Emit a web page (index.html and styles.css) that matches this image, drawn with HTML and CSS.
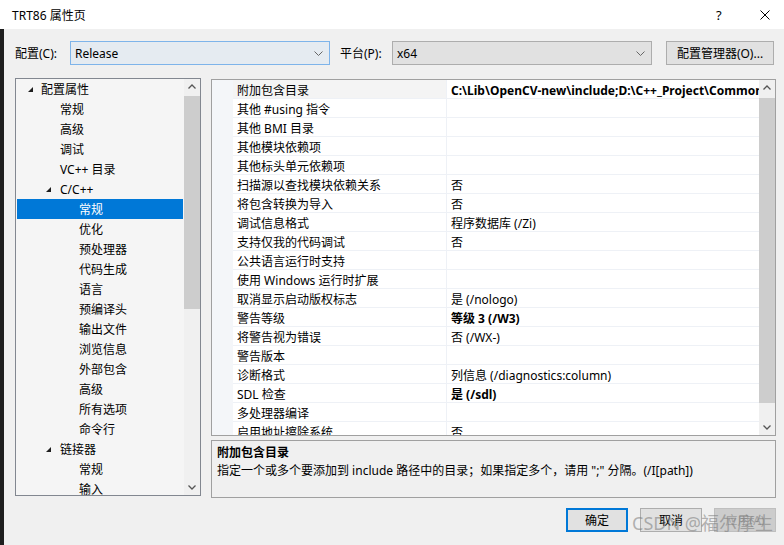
FILE: index.html
```html
<!DOCTYPE html>
<html lang="zh-CN">
<head>
    <meta charset="UTF-8">
    <title>TRT86 属性页</title>
    <link rel="stylesheet" href="styles.css">
</head>
<body>
    <div class="titlebar">
        <span class="title">TRT86 属性页</span>
        <span class="help">?</span>
        <span class="close">
            <svg width="10" height="10" viewBox="0 0 10 10"><path d="M0.5 0.5 L9.5 9.5 M9.5 0.5 L0.5 9.5" stroke="#000" stroke-width="1" fill="none"/></svg>
        </span>
    </div>
    <div class="frame">
        <div class="editor-strip"></div>
        <div class="dialog">
            <div class="toolbar">
                <label class="tb-label">配置(C):</label>
                <div class="combo combo-focus">
                    <span>Release</span>
                    <svg class="chev" width="9" height="5" viewBox="0 0 9 5"><path d="M0.5 0.5 L4.5 4.5 L8.5 0.5" stroke="#666" fill="none"/></svg>
                </div>
                <label class="tb-label plat">平台(P):</label>
                <div class="combo">
                    <span>x64</span>
                    <svg class="chev" width="9" height="5" viewBox="0 0 9 5"><path d="M0.5 0.5 L4.5 4.5 L8.5 0.5" stroke="#666" fill="none"/></svg>
                </div>
                <button class="btn cfg-btn">配置管理器(O)...</button>
            </div>

            <div class="main">
                <div class="tree">
                    <ul class="tree-list">
                        <li class="lv0"><i class="tri"></i>配置属性</li>
                        <li class="lv1">常规</li>
                        <li class="lv1">高级</li>
                        <li class="lv1">调试</li>
                        <li class="lv1">VC++ 目录</li>
                        <li class="lv1"><i class="tri"></i>C/C++</li>
                        <li class="lv2 selected">常规</li>
                        <li class="lv2">优化</li>
                        <li class="lv2">预处理器</li>
                        <li class="lv2">代码生成</li>
                        <li class="lv2">语言</li>
                        <li class="lv2">预编译头</li>
                        <li class="lv2">输出文件</li>
                        <li class="lv2">浏览信息</li>
                        <li class="lv2">外部包含</li>
                        <li class="lv2">高级</li>
                        <li class="lv2">所有选项</li>
                        <li class="lv2">命令行</li>
                        <li class="lv1"><i class="tri"></i>链接器</li>
                        <li class="lv2">常规</li>
                        <li class="lv2">输入</li>
                    </ul>
                    <div class="vscroll tree-scroll">
                        <svg class="arrow" width="16" height="16" viewBox="0 0 16 16"><path d="M4.5 9.5 L8 6 L11.5 9.5" stroke="#555" stroke-width="1.3" fill="none"/></svg>
                        <div class="track"><div class="thumb"></div></div>
                        <svg class="arrow" width="16" height="16" viewBox="0 0 16 16"><path d="M4.5 6.5 L8 10 L11.5 6.5" stroke="#555" stroke-width="1.3" fill="none"/></svg>
                    </div>
                </div>

                <div class="right">
                    <div class="grid">
                        <div class="grid-body">
                            <div class="gutter"></div>
                            <div class="rows">
                                <div class="row current"><span class="name">附加包含目录</span><span class="val bold">C:\Lib\OpenCV-new\include;D:\C++_Project\Common\include;%(AdditionalIncludeDirectories)</span></div>
                                <div class="row"><span class="name">其他 #using 指令</span><span class="val"></span></div>
                                <div class="row"><span class="name">其他 BMI 目录</span><span class="val"></span></div>
                                <div class="row"><span class="name">其他模块依赖项</span><span class="val"></span></div>
                                <div class="row"><span class="name">其他标头单元依赖项</span><span class="val"></span></div>
                                <div class="row"><span class="name">扫描源以查找模块依赖关系</span><span class="val">否</span></div>
                                <div class="row"><span class="name">将包含转换为导入</span><span class="val">否</span></div>
                                <div class="row"><span class="name">调试信息格式</span><span class="val">程序数据库 (/Zi)</span></div>
                                <div class="row"><span class="name">支持仅我的代码调试</span><span class="val">否</span></div>
                                <div class="row"><span class="name">公共语言运行时支持</span><span class="val"></span></div>
                                <div class="row"><span class="name">使用 Windows 运行时扩展</span><span class="val"></span></div>
                                <div class="row"><span class="name">取消显示启动版权标志</span><span class="val">是 (/nologo)</span></div>
                                <div class="row"><span class="name">警告等级</span><span class="val bold">等级 3 (/W3)</span></div>
                                <div class="row"><span class="name">将警告视为错误</span><span class="val">否 (/WX-)</span></div>
                                <div class="row"><span class="name">警告版本</span><span class="val"></span></div>
                                <div class="row"><span class="name">诊断格式</span><span class="val">列信息 (/diagnostics:column)</span></div>
                                <div class="row"><span class="name">SDL 检查</span><span class="val bold">是 (/sdl)</span></div>
                                <div class="row"><span class="name">多处理器编译</span><span class="val"></span></div>
                                <div class="row"><span class="name">启用地址擦除系统</span><span class="val">否</span></div>
                            </div>
                        </div>
                        <div class="vscroll grid-scroll">
                            <svg class="arrow" width="16" height="16" viewBox="0 0 16 16"><path d="M4.5 9.5 L8 6 L11.5 9.5" stroke="#555" stroke-width="1.3" fill="none"/></svg>
                            <div class="track"><div class="thumb"></div></div>
                            <svg class="arrow" width="16" height="16" viewBox="0 0 16 16"><path d="M4.5 6.5 L8 10 L11.5 6.5" stroke="#555" stroke-width="1.3" fill="none"/></svg>
                        </div>
                    </div>
                    <div class="desc">
                        <div class="desc-title">附加包含目录</div>
                        <div class="desc-text">指定一个或多个要添加到 include 路径中的目录；如果指定多个，请用 ";" 分隔。(/I[path])</div>
                    </div>
                </div>
            </div>

            <div class="buttons">
                <button class="btn default">确定</button>
                <button class="btn">取消</button>
                <button class="btn disabled">应用(A)</button>
            </div>
        </div>
    </div>
    <div class="watermark">CSDN @福尔摩生</div>
</body>
</html>
```

FILE: styles.css
```css
* {
    box-sizing: border-box;
}

body {
    margin: 0;
    width: 784px;
    height: 545px;
    overflow: hidden;
    background-color: #f0f0f0;
    font-family: "Noto Sans", "Noto Sans CJK SC", sans-serif;
    font-size: 12px;
    color: #000;
    position: relative;
}

/* title bar */
.titlebar {
    height: 29px;
    background-color: #fff;
    display: flex;
    align-items: center;
    padding-left: 12px;
}

.title {
    flex: 1;
    font-size: 12px;
}

.help {
    width: 44px;
    font-size: 13px;
    text-align: left;
}

.close {
    width: 24px;
    display: flex;
    align-items: center;
}

/* frame */
.frame {
    display: flex;
    height: 516px;
}

.editor-strip {
    width: 4px;
    background-color: #1e1e1e;
}

.dialog {
    width: 780px;
    display: flex;
    flex-direction: column;
}

/* toolbar */
.toolbar {
    display: flex;
    align-items: center;
    height: 24px;
    margin-top: 12px;
    padding-left: 11px;
}

.tb-label {
    width: 55px;
}

.tb-label.plat {
    width: 52px;
    margin-left: 10px;
}

.combo {
    width: 260px;
    height: 24px;
    border: 1px solid #adadad;
    background-color: #e1e1e1;
    display: flex;
    align-items: center;
    justify-content: space-between;
    padding: 0 6px 0 4px;
}

.combo-focus {
    border-color: #7eb4ea;
    background-color: #e5ebf1;
}

.btn {
    font-family: inherit;
    font-size: 12px;
    color: #000;
    background-color: #e1e1e1;
    border: 1px solid #adadad;
    height: 24px;
    width: 62px;
    padding: 0;
}

.cfg-btn {
    width: 108px;
    margin-left: 14px;
}

/* main area */
.main {
    display: flex;
    margin-top: 13px;
    padding-left: 11px;
}

.tree {
    width: 186px;
    height: 418px;
    border: 1px solid #828790;
    background-color: #f5f5f5;
    display: flex;
    overflow: hidden;
}

.tree-list {
    list-style: none;
    margin: 0;
    padding: 0 1px;
    flex: 1;
}

.tree-list li {
    height: 20px;
    line-height: 21px;
    white-space: nowrap;
    position: relative;
}

.tree-list .lv0 { padding-left: 24px; }
.tree-list .lv1 { padding-left: 43px; }
.tree-list .lv2 { padding-left: 62px; }

.tree-list .selected {
    background-color: #0078d7;
    color: #fff;
}

.tri {
    position: absolute;
    top: 8px;
    width: 0;
    height: 0;
    border-left: 5px solid transparent;
    border-bottom: 5px solid #1e1e1e;
}

.lv0 .tri { left: 11px; }
.lv1 .tri { left: 29px; }

/* scrollbars */
.vscroll {
    width: 16px;
    flex: none;
    display: flex;
    flex-direction: column;
    background-color: #f0f0f0;
}

.vscroll .arrow {
    display: block;
    flex: none;
}

.vscroll .track {
    flex: 1;
    position: relative;
}

.vscroll .thumb {
    position: absolute;
    left: 0;
    right: 0;
    background-color: #cdcdcd;
}

.tree-scroll .thumb {
    top: 1px;
    height: 213px;
}

.grid-scroll .thumb {
    top: 2px;
    height: 305px;
}

/* property grid */
.right {
    margin-left: 10px;
    padding-top: 1px;
    width: 565px;
    display: flex;
    flex-direction: column;
}

.grid {
    height: 357px;
    border: 1px solid #a0a0a0;
    background-color: #fff;
    display: flex;
    overflow: hidden;
}

.grid-body {
    flex: 1;
    min-width: 0;
    display: flex;
}

.gutter {
    width: 21px;
    flex: none;
    background-color: #f4f6f9;
}

.rows {
    flex: 1;
    min-width: 0;
    overflow: hidden;
}

.row {
    display: flex;
    height: 19px;
    border-bottom: 1px solid #eef1f6;
    line-height: 21px;
}

.row .name {
    width: 214px;
    flex: none;
    padding-left: 4px;
    border-right: 1px solid #eef1f6;
    white-space: nowrap;
    overflow: hidden;
}

.row .val {
    flex: 1;
    min-width: 0;
    padding-left: 4px;
    white-space: nowrap;
    overflow: hidden;
}

.row.current .name {
    background-color: #f4f4f4;
}

.bold {
    font-weight: bold;
}

/* description */
.desc {
    margin-top: 4px;
    height: 58px;
    border: 1px solid #a0a0a0;
    padding: 3px 5px;
}

.desc-title {
    font-weight: bold;
    line-height: 18px;
}

.desc-text {
    line-height: 18px;
}

/* dialog buttons */
.buttons {
    display: flex;
    justify-content: flex-end;
    gap: 12px;
    margin-top: 10px;
    padding-right: 8px;
}

.btn.default {
    border: 2px solid #0078d7;
}

.btn.disabled {
    color: #a0a0a0;
    background-color: #cccccc;
    border-color: #bfbfbf;
}

.watermark {
    position: absolute;
    left: 632px;
    top: 509px;
    font-size: 18px;
    color: rgba(120, 120, 120, 0.55);
    white-space: nowrap;
}
```
